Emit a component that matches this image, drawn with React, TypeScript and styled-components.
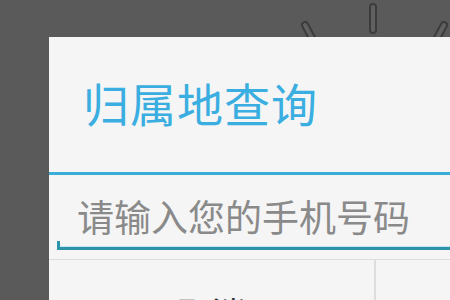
import React from "react";
import styled, { createGlobalStyle } from "styled-components";

const GlobalStyle = createGlobalStyle`
  html, body {
    margin: 0;
    padding: 0;
    background: #5a5a5a;
    overflow: hidden;
  }
  body {
    font-family: "Noto Sans CJK SC", "Noto Sans", sans-serif;
  }
`;

const Screen = styled.div`
  position: relative;
  width: 450px;
  height: 300px;
  overflow: hidden;
  background: #5a5a5a;
`;

const Backdrop = styled.svg`
  position: absolute;
  left: 0;
  top: 0;
`;

const Dialog = styled.div`
  position: relative;
  margin: 37px 0 0 49px;
  width: 652px;
  background: #f5f5f5;
  display: flex;
  flex-direction: column;
`;

const TitleBar = styled.div`
  height: 138px;
  box-sizing: border-box;
  display: flex;
  align-items: center;
  padding: 0 0 6px 34px;
  border-bottom: 3px solid #3badd8;
`;

const Title = styled.h1`
  margin: 0;
  font-size: 46px;
  font-weight: 400;
  letter-spacing: 1px;
  color: #3aaee0;
  line-height: 1;
`;

const Body = styled.div`
  padding: 21px 0 9px 8px;
  border-bottom: 1px solid #dddddd;
`;

const Field = styled.div`
  position: relative;
  border-bottom: 3px solid #2e92ab;
  box-shadow: 0 -1px 0 #bfeaf2 inset;
  padding: 0 0 10px 20px;

  &::before {
    content: "";
    position: absolute;
    left: 0;
    bottom: -3px;
    width: 3px;
    height: 9px;
    background: #2e92ab;
  }
`;

const Input = styled.input`
  border: none;
  outline: none;
  background: transparent;
  width: 100%;
  padding: 0;
  font-family: "Noto Sans CJK SC", sans-serif;
  font-size: 37px;
  line-height: 1.1;
  color: #555;

  &::placeholder {
    color: #8a8a8a;
  }
`;

const Buttons = styled.div`
  display: grid;
  grid-template-columns: 325px 1fr;
  height: 100px;
`;

const Button = styled.button<{ $divider?: boolean }>`
  border: none;
  background: transparent;
  border-left: ${(p) => (p.$divider ? "2px solid #dddddd" : "none")};
  font-family: "Noto Sans CJK SC", sans-serif;
  font-size: 34px;
  color: #333;
  padding: 28px 0 0 0;
  display: flex;
  justify-content: center;
  align-items: flex-start;
`;

const sticks = [
  { x1: 373, y1: 7, x2: 373, y2: 30 },
  { x1: 305, y1: 25, x2: 313, y2: 40 },
  { x1: 444, y1: 25, x2: 436, y2: 40 },
];

export default function App() {
  return (
    <>
      <GlobalStyle />
      <Screen>
        <Backdrop width="450" height="60" viewBox="0 0 450 60">
          <g stroke="#3c3c3c" strokeWidth="8" strokeLinecap="round">
            {sticks.map((s, i) => (
              <line key={i} {...s} />
            ))}
          </g>
          <g stroke="#606060" strokeWidth="4" strokeLinecap="round">
            {sticks.map((s, i) => (
              <line key={i} {...s} />
            ))}
          </g>
        </Backdrop>
        <Dialog>
          <TitleBar>
            <Title>归属地查询</Title>
          </TitleBar>
          <Body>
            <Field>
              <Input type="tel" placeholder="请输入您的手机号码" />
            </Field>
          </Body>
          <Buttons>
            <Button type="button">取消</Button>
            <Button type="button" $divider>查询</Button>
          </Buttons>
        </Dialog>
      </Screen>
    </>
  );
}
